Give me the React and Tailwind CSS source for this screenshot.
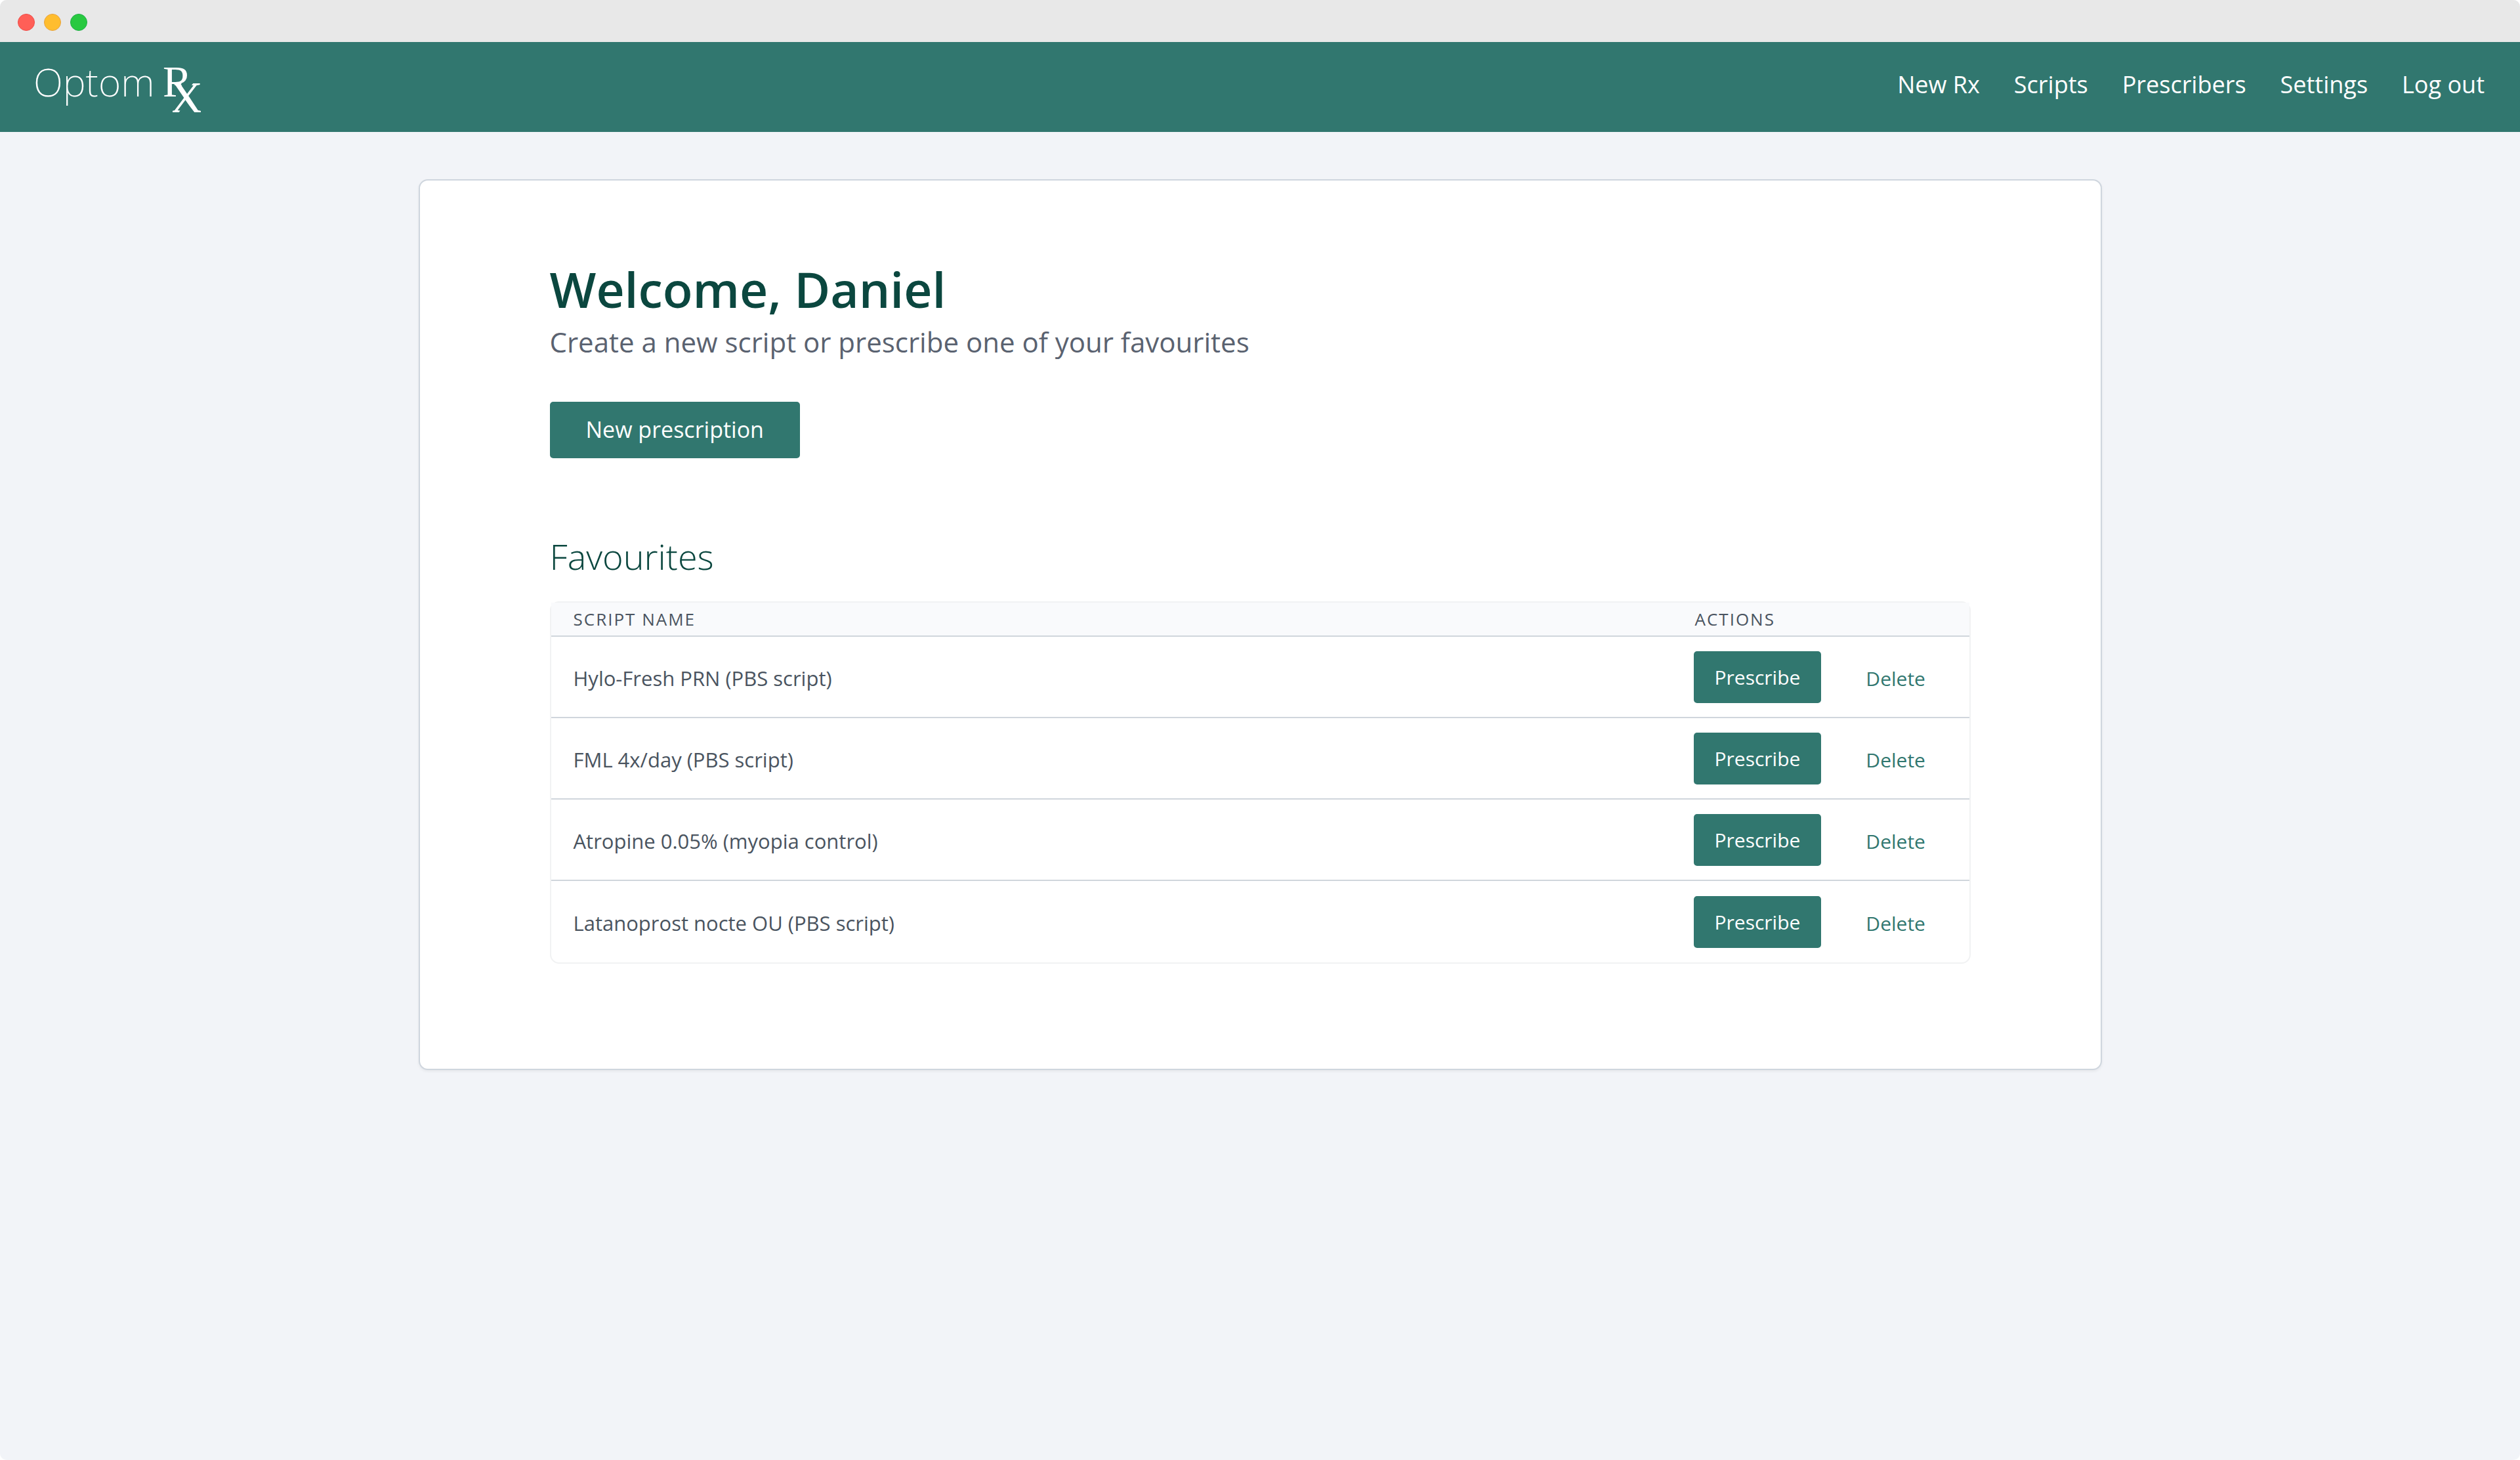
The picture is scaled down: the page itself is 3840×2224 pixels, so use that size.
const NAV_LINKS = ["New Rx", "Scripts", "Prescribers", "Settings", "Log out"];

const FAVOURITES = [
  "Hylo-Fresh PRN (PBS script)",
  "FML 4x/day (PBS script)",
  "Atropine 0.05% (myopia control)",
  "Latanoprost nocte OU (PBS script)",
];

function TitleBar() {
  return (
    <div className="flex h-16 items-center gap-[14px] bg-[#e8e8e8] px-[27px] pt-1">
      <span className="size-[26px] rounded-full border border-[#f04b47] bg-[#ff5f57]" />
      <span className="size-[26px] rounded-full border border-[#e8a33d] bg-[#ffbd2e]" />
      <span className="size-[26px] rounded-full border border-[#1fae46] bg-[#28c940]" />
    </div>
  );
}

function Logo() {
  return (
    <a href="#home" aria-label="OptomRx home">
      <svg width="264" height="80" viewBox="-4 0 264 80" className="overflow-visible fill-white">
        <defs>
          <clipPath id="logo-r">
            <path d="M190 0h70v26h-46v40h-24z" />
          </clipPath>
          <clipPath id="logo-x">
            <path d="M210 24H220L230 38L241 24H252V28L236 47L252 67V70H243L230 53L218 70H209V67L225 47Z" />
          </clipPath>
        </defs>
        <text x="-3" y="45" fontSize="59" className="font-['Noto_Sans',sans-serif] font-[250]">
          Optom
        </text>
        <text x="194" y="45" fontSize="67" clipPath="url(#logo-r)" className="font-['Liberation_Serif',serif]">
          R
        </text>
        <text x="206" y="69" fontSize="96" clipPath="url(#logo-x)" className="font-['Liberation_Serif',serif]">
          x
        </text>
      </svg>
    </a>
  );
}

function Header() {
  return (
    <header className="flex items-start justify-between bg-[#31776f] pt-[38px] pr-[54px] pb-[19px] pl-[50px] text-white">
      <Logo />
      <nav className="flex gap-[52px] text-[36px] leading-[54px]">
        {NAV_LINKS.map((label) => (
          <a key={label} href="#nav">
            {label}
          </a>
        ))}
      </nav>
    </header>
  );
}

function FavouritesTable() {
  return (
    <div className="mt-[33px] rounded-[14px] border-2 border-[#f1f2f3]">
      <table className="w-full border-separate border-spacing-0 text-left text-[#4a5460]">
        <thead>
          <tr className="bg-[#f9fafc] text-[26px] leading-[50px] tracking-[2px] uppercase">
            <th scope="col" className="border-b-2 border-[#d0d6dc] px-[34px] font-normal">
              Script name
            </th>
            <th scope="col" className="w-[420px] border-b-2 border-[#d0d6dc] px-[2px] font-normal">
              Actions
            </th>
          </tr>
        </thead>
        <tbody>
          {FAVOURITES.map((name) => (
            <tr key={name} className="group h-[124px]">
              <td className="border-b-2 border-[#d0d6dc] px-[34px] pt-1 text-[31px] leading-[45px] group-last:border-b-0">
                {name}
              </td>
              <td className="border-b-2 border-[#d0d6dc] group-last:border-b-0">
                <div className="flex items-center gap-[68px] text-[30px] leading-[45px]">
                  <button type="button" className="rounded-[5px] bg-[#31776f] px-8 py-[17px] text-white">
                    Prescribe
                  </button>
                  <a href="#delete" className="pt-1 text-[#31776f]">
                    Delete
                  </a>
                </div>
              </td>
            </tr>
          ))}
        </tbody>
      </table>
    </div>
  );
}

export default function App() {
  return (
    <div className="min-h-screen bg-white font-['Open_Sans',sans-serif]">
      <div className="min-h-screen overflow-hidden rounded-[10px] bg-[#f2f4f8]">
        <TitleBar />
        <Header />
        <main className="mx-auto mt-[72px] max-w-[2565px] rounded-[14px] border-2 border-[#cfd6de] bg-white px-[198px] pt-[120px] pb-[160px] shadow-[0_2px_4px_rgba(0,0,0,0.06)]">
          <h1 className="text-[75px] leading-[90px] font-semibold text-[#0b473f]">Welcome, Daniel</h1>
          <p className="mt-1 text-[42px] leading-[63px] text-[#5a6270]">
            Create a new script or prescribe one of your favourites
          </p>
          <button
            type="button"
            className="mt-[60px] block rounded-[5px] bg-[#31776f] px-[55px] pt-[15px] pb-[17px] text-[34px] leading-[54px] text-white"
          >
            New prescription
          </button>
          <h2 className="mt-[113px] text-[54px] leading-[72px] font-[320] text-[#0b473f]">Favourites</h2>
          <FavouritesTable />
        </main>
      </div>
    </div>
  );
}
